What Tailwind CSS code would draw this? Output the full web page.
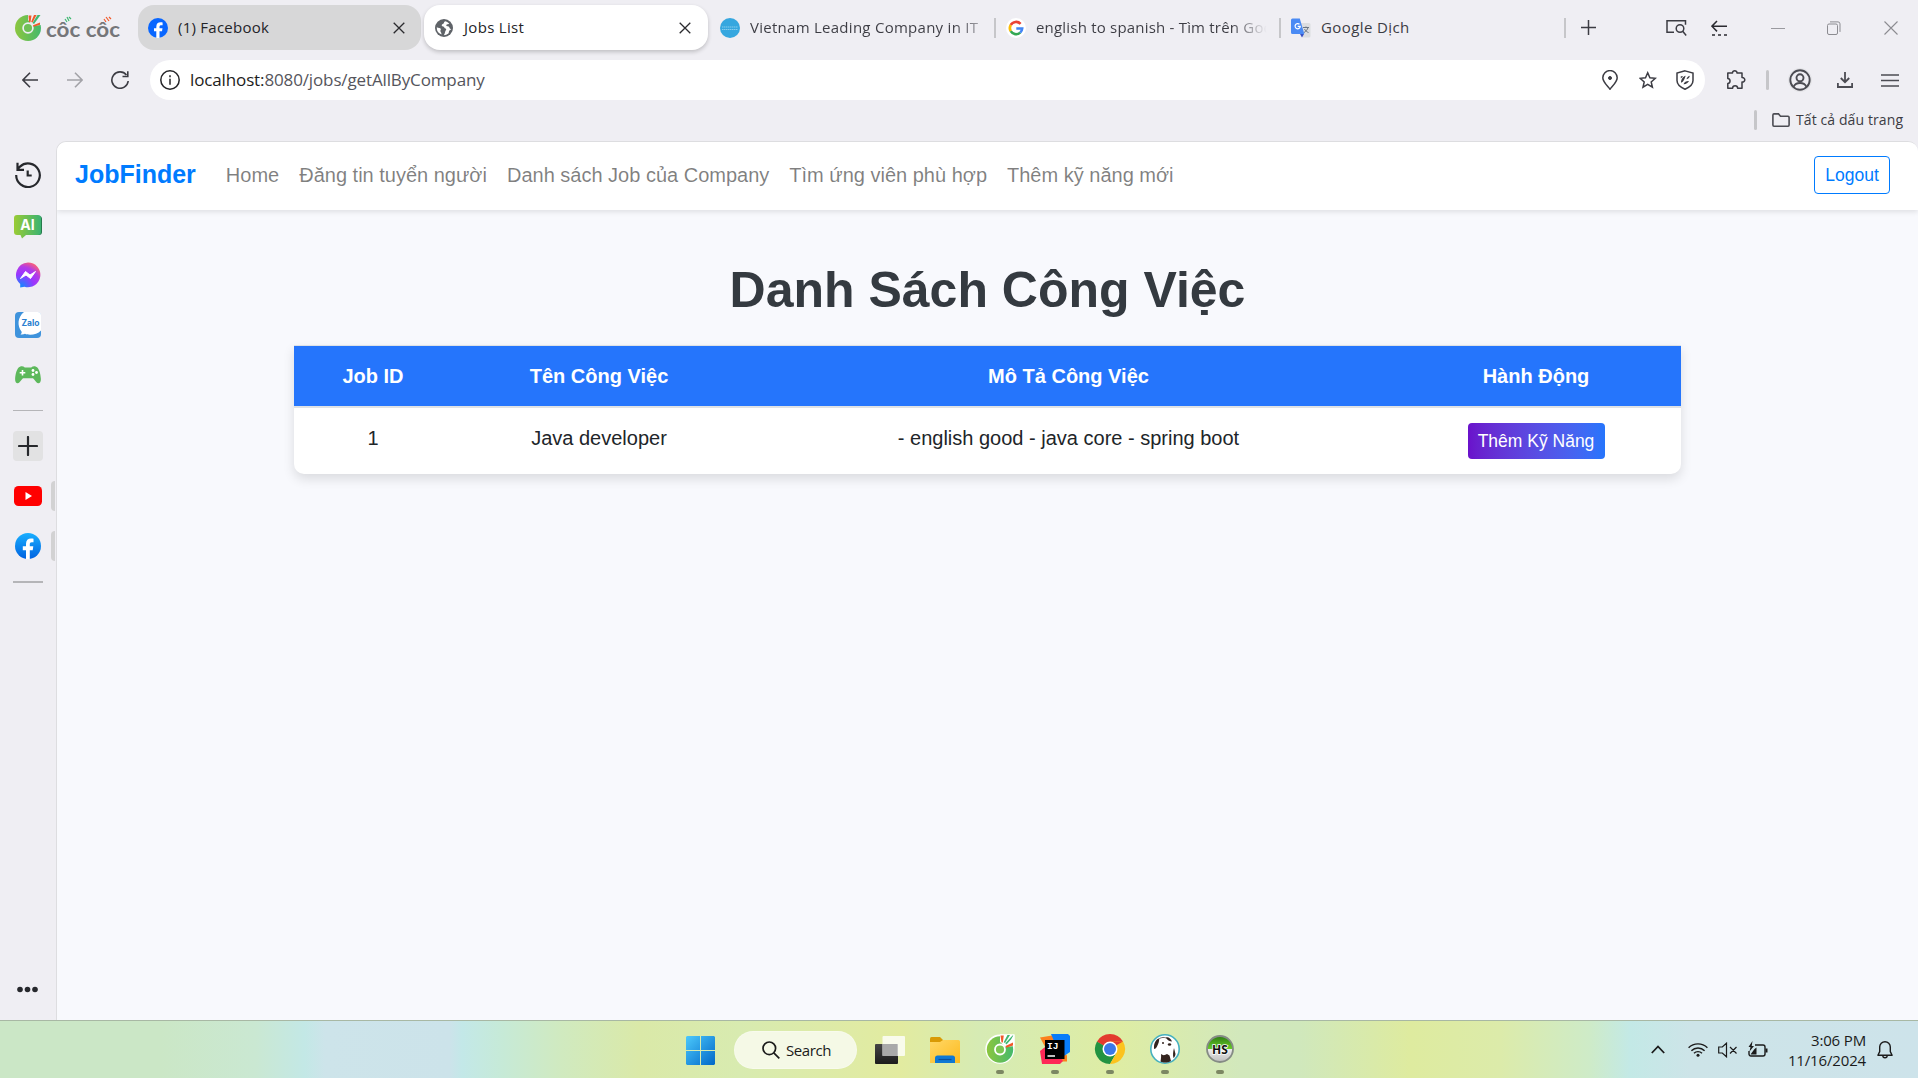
<!DOCTYPE html>
<html lang="vi">
<head>
<meta charset="utf-8">
<title>Jobs List</title>
<script src="https://cdn.jsdelivr.net/npm/@tailwindcss/browser@4"></script>
</head>
<body class="flex h-[1078px] w-[1918px] flex-col overflow-hidden bg-[#efeef3] font-['Open_Sans',sans-serif] text-[#3c3c43]">

<!-- Tab strip -->
<header class="flex h-[60px] shrink-0 items-start pt-[5px]">
  <div class="flex h-[45px] w-[138px] items-center pl-[15px]">
    <svg class="h-[26px] w-[26px] shrink-0" viewBox="0 0 26 26">
      <defs><linearGradient id="cc" x1="0" y1="0" x2="1" y2="0"><stop offset="0" stop-color="#8cc63f"/><stop offset="1" stop-color="#45b96b"/></linearGradient></defs>
      <circle cx="13" cy="13" r="13" fill="url(#cc)"/>
      <path d="M13 0V5l5 6 8-1V0z" fill="#efeef3"/>
      <circle cx="13" cy="13" r="4.900" fill="#6fc056" stroke="#efeef3" stroke-width="1.700"/>
      <path d="M13.500 0.500h3l-1 6.500h-1.500zM25 7.500v2.300l-6.500 2 -.5-1.500z" fill="#f1592a"/><path d="M19 0h2.600l-4 7.500-1.500-.6z" fill="#f1592a"/><path d="M22.500 0h3l-6.500 9-1.500-1z" fill="#3fb871"/>
    </svg>
    <svg class="ml-[4px] h-[30px] w-[78px]" viewBox="0 0 78 30">
      <text x="1" y="24" textLength="74" lengthAdjust="spacingAndGlyphs" font-family="Lato" font-weight="700" font-size="21" fill="#757679">côc côc</text>
      <path d="M22 9l-2-3M24 8l-2-4M26 6l-2-2" stroke="#3fb871" stroke-width="1.200"/><path d="M61 9l-2-3M64 8l-3-4M66 6l-2-2" stroke="#f1592a" stroke-width="1.200"/>
    </svg>
  </div>
  <div class="flex h-[45px] w-[283px] items-center rounded-[16px] bg-[#d7d7d8] pl-[10px] pr-[16px] text-[15px] text-[#242428]">
    <svg class="h-5 w-5" viewBox="0 0 20 20"><circle cx="10" cy="10" r="10" fill="#0866ff"/><path d="M8.300 20v-6.700H6v-3h2.300V9c0-3.300 1.500-4.700 4.500-4.700.6 0 1.400.1 1.800.2v2.700h-1.300c-1.300 0-1.800.6-1.800 1.900v1.200h3l-.5 3h-2.500V20z" fill="#fff"/></svg>
    <span class="ml-[10px] grow whitespace-nowrap tracking-[0.25px]">(1) Facebook</span>
    <svg class="h-3 w-3" viewBox="0 0 12 12" stroke="#2a2a2e" stroke-width="1.300"><path d="M.7.7l10.600 10.600M11.300.7L.7 11.300"/></svg>
  </div>
  <div class="ml-[3px] flex h-[45px] w-[284px] items-center rounded-[16px] bg-white pl-[11px] pr-[17px] text-[15px] text-[#242428] shadow-[0_2px_4px_rgba(0,0,0,0.2)]">
    <svg class="h-[18px] w-[18px]" viewBox="0 0 18 18"><circle cx="9" cy="9" r="9" fill="#5f6368"/><path d="M10.500 2.200c-2 .3-1 2-2.600 2.800-1 .4-1.400 1-1 2 .5.700 2 .3 2.400 1.400.5 1.300 1.900.4 1.900 2 0 1-1 1-1 2.300-.2 1.500-1.200 3-1.400 3.500a7.200 7.200 0 0 0 4.600-1.700c.8-1 .2-2 1-3 .6-.8 1.700-.7 1.800-1.600-2.200.4-1.200-2.700-3.800-2.600-1.300 0-1.500-1.200-.6-1.800.7-.5 1.700-.2 2.500-.8a7 7 0 0 0-3.800-2.500zM1.800 8.300c1.500 1 3.700.5 4 1.800.3 1.200-.8 1.200-.3 2.500.2.900 1 1 1 2.900A7.200 7.200 0 0 1 1.800 8.300z" fill="#fff"/></svg>
    <span class="ml-[11px] grow whitespace-nowrap tracking-[0.3px]">Jobs List</span>
    <svg class="h-3 w-3" viewBox="0 0 12 12" stroke="#2a2a2e" stroke-width="1.300"><path d="M.7.7l10.600 10.600M11.300.7L.7 11.300"/></svg>
  </div>
  <div class="flex h-[45px] w-[288px] items-center pl-[12px] text-[15px]">
    <svg class="h-5 w-5 shrink-0" viewBox="0 0 20 20"><circle cx="10" cy="10" r="10" fill="#36a7df"/><path d="M2 9h16M2 11.500h16" stroke="#9bd5f0" stroke-width=".8" stroke-dasharray="1.500 .5"/></svg>
    <span class="ml-[10px] w-[231px] overflow-hidden bg-linear-to-r from-[#3c3c43] from-88% to-[#3c3c43]/40 bg-clip-text whitespace-nowrap text-transparent tracking-[0.27px]">Vietnam Leading Company in IT</span>
    <span class="ml-[13px] h-5 w-[2px] bg-[#c6c6c9]"></span>
  </div>
  <div class="flex h-[45px] w-[285px] items-center pl-[10px] text-[15px]">
    <svg class="h-5 w-5 shrink-0" viewBox="0 0 20 20"><circle cx="10" cy="10" r="10" fill="#fff"/><g fill="none" stroke-width="2.600"><path d="M14.600 5.900A6.200 6.200 0 0 0 4.700 7" stroke="#ea4335"/><path d="M4.700 7a6.200 6.200 0 0 0 0 6.200" stroke="#fbbc05"/><path d="M4.700 13.200a6.200 6.200 0 0 0 9.500 1.400" stroke="#34a853"/><path d="M14.200 14.600a6 6 0 0 0 2-4.100H10.300" stroke="#4285f4"/></g></svg>
    <span class="ml-[10px] w-[233px] overflow-hidden bg-linear-to-r from-[#3c3c43] from-84% to-[#3c3c43]/0 to-99% bg-clip-text whitespace-nowrap text-transparent tracking-[0.2px]">english to spanish - Tìm trên Goo</span>
    <span class="ml-[10px] h-5 w-[2px] bg-[#c6c6c9]"></span>
  </div>
  <div class="flex h-[45px] w-[285px] items-center pl-[10px] text-[15px]">
    <svg class="h-5 w-5 shrink-0" viewBox="0 0 20 20"><path d="M7 5h11a1.500 1.500 0 0 1 1.500 1.500V18a1.500 1.500 0 0 1-1.500 1.500h-6z" fill="#dcdde0"/><path d="M9 16h4l-2 3.500z" fill="#3a53c5"/><path d="M1.500.5h7.300L13.300 16H1.500A1.500 1.500 0 0 1 0 14.500V2A1.500 1.500 0 0 1 1.500.5z" fill="#4a8af4"/><path d="M8.500 6.300a2.600 2.600 0 1 0 .8 2H6.700" fill="none" stroke="#fff" stroke-width="1.200"/><path d="M12 9.500h6M15 8.500v1M17 9.500c-.5 2-2 4-4 5M13.500 11c.7 1.500 2.500 3 4 3.500" stroke="#6b7785" stroke-width="1" fill="none"/></svg>
    <span class="ml-[10px] grow whitespace-nowrap tracking-[0.4px]">Google Dịch</span>
    <span class="h-5 w-[2px] bg-[#c6c6c9]"></span>
  </div>
  <div class="flex h-[45px] grow items-center pl-[15px]">
    <svg class="h-[15px] w-[15px]" viewBox="0 0 15 15" stroke="#3c3c43" stroke-width="1.500"><path d="M7.500 0v15M0 7.500h15"/></svg>
    <svg class="ml-[70px] h-[18px] w-[21px]" viewBox="0 0 21 18" fill="none" stroke="#3c3c43" stroke-width="1.500"><path d="M8 13.200H1V1.700h18.500v4"/><circle cx="14" cy="9.500" r="3.800"/><path d="M16.700 12.300l3.500 4.200"/></svg>
    <svg class="ml-[24px] h-[16px] w-[17px]" viewBox="0 0 17 16" fill="none" stroke="#2a2a30" stroke-width="1.500"><path d="M16 6.200H1M6 1L.9 6.200 6 11.400M1 15h3M7 15h3M13 15h3"/></svg>
    <svg class="ml-[43px] h-[14px] w-[14px]" viewBox="0 0 14 14" stroke="#9a9a9f"><path d="M0 7.500h14"/></svg>
    <svg class="ml-[42px] h-[14px] w-[14px]" viewBox="0 0 14 14" fill="none" stroke="#8c8c91"><rect x=".5" y="3" width="10" height="10.500" rx="1.500"/><path d="M3 .9h8a2 2 0 0 1 2 2v8"/></svg>
    <svg class="ml-[43px] h-[14px] w-[14px]" viewBox="0 0 14 14" stroke="#8c8c91" stroke-width="1.100"><path d="M.5.5l13 13M13.500.5l-13 13"/></svg>
  </div>
</header>

<!-- Address bar -->
<div class="flex h-[40px] shrink-0 items-center">
  <svg class="ml-[22px] h-4 w-4" viewBox="0 0 16 16" fill="none" stroke="#3c3c43" stroke-width="1.600"><path d="M16 8H1M8 .7L.9 8 8 15.300"/></svg>
  <svg class="ml-[29px] h-4 w-4" viewBox="0 0 16 16" fill="none" stroke="#a3a3a8" stroke-width="1.600"><path d="M0 8h15M8 .7L15.100 8 8 15.300"/></svg>
  <svg class="ml-[28px] h-[18px] w-[18px]" viewBox="0 0 18 18" fill="none" stroke="#3c3c43" stroke-width="1.600"><path d="M17.200 10A8.200 8.200 0 1 1 15.500 4M11.500 5.500h5.300V.3"/></svg>
  <div class="ml-[21px] flex h-[40px] w-[1555px] items-center rounded-full bg-white pl-[10px] pr-[11px]">
    <svg class="h-5 w-5" viewBox="0 0 20 20" fill="none" stroke="#242428" stroke-width="1.500"><circle cx="10" cy="10" r="9.200"/><path d="M10 8.700v6M10 5.300v1.900"/></svg>
    <span class="ml-[10px] grow whitespace-nowrap text-[17px] tracking-[-0.13px] text-[#55555c]"><span class="text-[#1c1c20]">localhost:</span>8080/jobs/getAllByCompany</span>
    <svg class="h-5 w-4" viewBox="0 0 16 20" fill="none" stroke="#3c3c43" stroke-width="1.500"><path d="M8 19.200C5 15.500.8 11.800.8 7.800a7.200 7.200 0 0 1 14.400 0c0 4-4.200 7.700-7.200 11.400z"/><circle cx="8" cy="8" r="1.500" fill="#3c3c43" stroke-width="1"/></svg>
    <svg class="ml-[21px] h-[18px] w-[18px]" viewBox="0 0 18 18" fill="none" stroke="#3c3c43" stroke-width="1.500"><path d="M8.700 1.800l2.200 5 5.400.5-4.100 3.600 1.200 5.300L8.700 13.400l-4.700 2.800 1.200-5.300L1.100 7.300l5.400-.5z"/></svg>
    <svg class="ml-[19px] h-5 w-[18px]" viewBox="0 0 18 20" fill="none" stroke="#3c3c43" stroke-width="1.500"><path d="M9 .9l8 2.200v7.400c0 4-3.500 6.800-8 8.700-4.500-1.900-8-4.700-8-8.700V3.100z"/><path d="M4.800 8.500V6.200h2.400zM5 12.800c0-3.500 2-6.300 4.700-7-.6 1.500-.8 2.500-1.600 4-.7 1.500-1.800 2.500-3.100 3zM7.500 14.300c1-2.500 3-3.500 5.500-3.300-1 2-3 3.500-5.500 3.300zM10.500 9.300c.5-1.800 1.500-3 3.200-3.500 0 1.800-1.200 3-3.200 3.500z" fill="#3c3c43" stroke="none"/></svg>
  </div>
  <svg class="ml-[21px] h-5 w-5" viewBox="0 0 20 20" fill="none" stroke="#3c3c43" stroke-width="1.500"><path d="M1.800 3h4.700c-.3-3 4.800-3 4.500 0H16v4.600c3.700-.3 3.700 4.700 0 4.500V18.200h-4.400c0-3.200-5-3.200-5 0H1.800v-4.800c3-.3 3-4.600 0-4.900z" stroke-linejoin="round"/></svg>
  <span class="ml-[20px] h-5 w-[3px] rounded bg-[#c6c6c9]"></span>
  <svg class="ml-[19px] h-6 w-6" viewBox="0 0 24 24" fill="none" stroke="#4c4c53" stroke-width="1.900"><circle cx="12" cy="12" r="11.500" stroke="#e2e2e5" stroke-width="1"/><circle cx="12" cy="12" r="9.700"/><circle cx="12" cy="9.800" r="3.500"/><path d="M5.500 18.800c2.500-5 10.500-5 13 0"/></svg>
  <svg class="ml-[25px] h-4 w-4" viewBox="0 0 16 16" fill="none" stroke="#4c4c53" stroke-width="1.800"><path d="M8 0v10M3.800 6L8 10.200 12.200 6M.9 11v4h14.200v-4"/></svg>
  <svg class="ml-[28px] h-[13px] w-[18px]" viewBox="0 0 18 13" stroke="#4c4c53" stroke-width="1.700"><path d="M0 1h18M0 6.500h18M0 12h18"/></svg>
</div>

<!-- Bookmarks bar -->
<div class="flex h-[40px] shrink-0 items-center justify-end pr-[14px] text-[14px]">
  <span class="h-5 w-[3px] rounded bg-[#c6c6c9]"></span>
  <svg class="ml-[15px] h-[14px] w-[18px]" viewBox="0 0 18 14" fill="none" stroke="#4c4c53" stroke-width="1.600"><path d="M.9 12V2A1.200 1.200 0 0 1 2 .9h4.500l2 2.300H16A1.200 1.200 0 0 1 17.100 4.400V12a1.200 1.200 0 0 1-1.100 1.200H2A1.200 1.200 0 0 1 .9 12z"/></svg>
  <span class="ml-[6px] w-[108px] whitespace-nowrap pb-px tracking-[0.1px]">Tất cả dấu trang</span>
</div>

<div class="flex min-h-0 grow">
  <!-- Browser sidebar -->
  <aside class="flex w-[56px] shrink-0 flex-col pt-[10px]">
    <div class="flex h-[50px] w-[55px] items-center justify-center">
      <svg class="h-[26px] w-[26px]" viewBox="0 0 26 26" fill="none" stroke="#26282c" stroke-width="2.200"><path d="M1.200 13A11.800 11.800 0 1 0 5 4.600L2.500 7M2.500.8v7h6.500M12.700 8.500v5h4"/></svg>
    </div>
    <div class="flex h-[50px] w-[56px] items-center justify-center pt-[3px]">
      <svg class="h-[26px] w-[28px]" viewBox="0 0 28 26"><defs><linearGradient id="ai"><stop offset="0" stop-color="#9acb35"/><stop offset="1" stop-color="#3bb371"/></linearGradient></defs><rect x="4" y="2" width="24" height="19" rx="3" fill="#267a4c"/><path d="M3 1h21a3 3 0 0 1 3 3v14a3 3 0 0 1-3 3H12l-4 3.500L6.500 21H3a3 3 0 0 1-3-3V4a3 3 0 0 1 3-3z" fill="url(#ai)"/><text x="13.500" y="15.500" text-anchor="middle" font-family="Inter" font-size="14" font-weight="700" fill="#fff">AI</text></svg>
    </div>
    <div class="flex h-[50px] w-[56px] items-center justify-center">
      <svg class="h-[26px] w-[26px]" viewBox="0 0 26 26"><defs><radialGradient id="ms" cx=".2" cy="1" r="1.100"><stop offset="0" stop-color="#0a8dff"/><stop offset=".5" stop-color="#9a36ff"/><stop offset=".75" stop-color="#b23be8"/><stop offset="1" stop-color="#ff6370"/></radialGradient></defs><path d="M13 .4A12.400 12.400 0 1 1 9.500 24.700L5.200 25.500V22A12.400 12.400 0 0 1 13 .4z" fill="url(#ms)"/><path d="M5.500 16.500l5-7 4.500 3.500 5.500-3.500-5 7-4.500-3.500z" fill="#fff" stroke="#fff"/></svg>
    </div>
    <div class="flex h-[50px] w-[56px] items-center justify-center">
      <svg class="h-[26px] w-[26px]" viewBox="0 0 26 26"><rect width="26" height="26" rx="4" fill="#3f93dc"/><path d="M9 0h14a3 3 0 0 1 3 3v15.500c-4 4.500-12 5-16 3.300-1.200.8-3 .9-4.500.7 1-1 1.500-2 1-3C2 14 2.500 5 9 0z" fill="#fff"/><text x="15.500" y="14" text-anchor="middle" font-family="Inter" font-size="8.500" font-weight="700" fill="#2b7fd0">Zalo</text></svg>
    </div>
    <div class="flex h-[50px] w-[56px] items-center justify-center">
      <svg class="h-[18px] w-[26px]" viewBox="0 0 26 18"><path d="M5 .7C7 0 8.500.5 9.800 1.500h6.400C17.500.5 19 0 21 .7c3 1 4.600 7 4.900 12.300.1 3-1.200 4.500-2.700 4.300-2.200-.3-3.500-3.800-5.300-5H8.100c-1.800 1.200-3.100 4.700-5.300 5C1.300 17.500 0 16 .1 13 .4 7.700 2 1.700 5 .7z" fill="#5db85b"/><path d="M7.500 4v5.500M4.700 6.700h5.600" stroke="#fff" stroke-width="1.600"/><g fill="#fff"><circle cx="18" cy="4.500" r="1.400"/><circle cx="18" cy="8.500" r="1.400"/><circle cx="21.500" cy="6.500" r="1.400"/></g></svg>
    </div>
    <div class="ml-[13px] mt-[10px] h-px w-[30px] shrink-0 bg-[#b5b5b8]"></div>
    <div class="ml-[13px] mt-[20px] flex h-[30px] w-[30px] shrink-0 items-center justify-center rounded-[4px] bg-[#e2e2e3]">
      <svg class="mr-[1px] h-5 w-5" viewBox="0 0 20 20" stroke="#26282c" stroke-width="2.200" stroke-linecap="round"><path d="M10 1v18M1 10h18"/></svg>
    </div>
    <div class="mt-[10px] flex h-[50px] items-center">
      <svg class="ml-[14px] h-5 w-7" viewBox="0 0 28 20"><rect width="28" height="20" rx="4.500" fill="#f00"/><path d="M11.500 6v8l6.500-4z" fill="#fff"/></svg>
      <span class="ml-[9px] h-[30px] w-[4px] rounded-l-[4px] bg-[#d2d2d3]"></span>
    </div>
    <div class="flex h-[50px] items-center">
      <svg class="ml-[15px] h-[26px] w-[26px]" viewBox="0 0 26 26"><defs><linearGradient id="fb" x2="0" y2="1"><stop offset="0" stop-color="#19afff"/><stop offset="1" stop-color="#0062e0"/></linearGradient></defs><circle cx="13" cy="13" r="13" fill="url(#fb)"/><path d="M11 26v-8.700H7.800v-4H11v-2.500c0-3.400 2-5.200 5-5.200 1 0 2 .1 2.500.2v3.500h-1.700c-1.500 0-2 .8-2 1.900v2.100h3.500l-.6 4h-2.900V26z" fill="#fff"/></svg>
      <span class="ml-[10px] h-[30px] w-[4px] rounded-l-[4px] bg-[#d2d2d3]"></span>
    </div>
    <div class="ml-[13px] mt-[10px] h-[2px] w-[30px] shrink-0 bg-[#b5b5b8]"></div>
    <svg class="mb-[27px] ml-[17px] mt-auto h-[7px] w-[21px] shrink-0" viewBox="0 0 21 7" fill="#26282c"><circle cx="3" cy="3.500" r="2.800"/><circle cx="10.500" cy="3.500" r="2.800"/><circle cx="18" cy="3.500" r="2.800"/></svg>
  </aside>

  <!-- Page -->
  <main class="mt-px flex grow flex-col overflow-hidden rounded-t-[10px] border-l border-t border-[#dddde0] bg-[#f8f9fd] font-['Liberation_Sans',Arial,sans-serif]">
    <nav class="flex h-[68px] shrink-0 items-center bg-white pb-[2px] pl-[18px] pr-[28px] text-[20px] text-black/50 shadow-[0_2px_5px_rgba(0,0,0,0.1)]">
      <a class="text-[25px] font-bold text-[#007bff]">JobFinder</a>
      <div class="ml-[30px] flex gap-[20px] whitespace-nowrap">
        <a>Home</a><a>Đăng tin tuyển người</a><a>Danh sách Job của Company</a><a>Tìm ứng viên phù hợp</a><a>Thêm kỹ năng mới</a>
      </div>
      <a class="ml-auto flex h-[38px] w-[76px] items-center justify-center rounded-[4px] border border-[#007bff] pt-px text-[17.5px] text-[#007bff]">Logout</a>
    </nav>
    <h1 class="mt-[50px] text-center text-[50px] font-bold leading-[60px] text-[#343a40]">Danh Sách Công Việc</h1>
    <div class="mx-auto mt-[25px] w-[1387px] overflow-hidden rounded-b-[10px] bg-white text-center text-[20px] text-[#212529] shadow-[0_5px_12px_rgba(0,0,0,0.12)]">
      <div class="grid h-[63px] grid-cols-[158px_294px_645px_290px] items-center border-b-2 border-t border-[#dee2e6] bg-[#2575fc] font-bold text-white">
        <div>Job ID</div><div>Tên Công Việc</div><div>Mô Tả Công Việc</div><div>Hành Động</div>
      </div>
      <div class="grid h-[66px] grid-cols-[158px_294px_645px_290px] items-start pt-[15px] leading-[30px]">
        <div>1</div><div>Java developer</div><div>- english good - java core - spring boot</div>
        <div class="flex justify-center"><button class="h-[36px] w-[137px] rounded-[4px] bg-linear-to-r from-[#6a11cb] to-[#2575fc] text-[17.5px] text-white">Thêm Kỹ Năng</button></div>
      </div>
    </div>
  </main>
</div>

<!-- Windows taskbar -->
<footer class="flex h-[58px] shrink-0 items-center border-t border-[#a8b8a4] bg-[linear-gradient(90deg,#cbe7c6_0px,#cbe7c6_160px,#cae8d2_255px,#c3e8e6_305px,#cde4ea_325px,#cce3ea_450px,#c3e8e8_462px,#c6ead8_500px,#d0eac0_560px,#dae9a8_640px,#d8ebb0_740px,#e2eba0_900px,#d6ebb4_980px,#deeda4_1120px,#d2e8bc_1240px,#d0e8bc_1300px,#deeb9f_1410px,#dcebaa_1500px,#ceebc8_1590px,#c3e9e6_1630px,#cde4e8_1690px,#cde3ea_1918px)] text-[#1b1b1b]">
  <svg class="ml-[686px] mt-px h-[29px] w-[29px] shrink-0" viewBox="0 0 29 29"><defs><linearGradient id="wi" x2="1" y2="1"><stop offset="0" stop-color="#4cc9fb"/><stop offset="1" stop-color="#0067c8"/></linearGradient></defs><path d="M1 0h13v14H0V1zM15 0h13l1 1v13H15zM0 15h14v14H1l-1-1zM15 15h14v13l-1 1H15z" fill="url(#wi)"/></svg>
  <div class="ml-[19px] mt-px flex h-[38px] w-[123px] shrink-0 items-center rounded-full border border-white/30 bg-[#f5f9e6] pl-[27px] text-[15px]">
    <svg class="h-[18px] w-[18px]" viewBox="0 0 18 18" fill="none" stroke="#1b1b1b" stroke-width="1.700"><circle cx="7.300" cy="7.300" r="6.300"/><path d="M11.800 11.800l5.500 5.500"/></svg>
    <span class="ml-[6px] tracking-[-0.4px]">Search</span>
  </div>
  <div class="ml-[13px] flex h-full shrink-0 items-center gap-[15px]">
    <svg class="h-[40px] w-[40px]" viewBox="0 0 40 40"><defs><linearGradient id="tv" x2="0" y2="1"><stop offset="0" stop-color="#444"/><stop offset="1" stop-color="#1c1c1c"/></linearGradient></defs><rect x="5" y="14" width="23" height="20" rx="1" fill="url(#tv)"/><rect x="12.500" y="6" width="22.500" height="20" rx="1" fill="#fff" fill-opacity=".8"/><rect x="12.500" y="14" width="15" height="12" fill="#a9a9a9"/></svg>
    <svg class="h-[40px] w-[40px]" viewBox="0 0 40 40"><defs><linearGradient id="fo" x2="1" y2="1"><stop offset="0" stop-color="#ffd766"/><stop offset="1" stop-color="#fdbb1f"/></linearGradient></defs><path d="M5 8.500A1.500 1.500 0 0 1 6.500 7H15l3 3v4H5z" fill="#d99a05"/><path d="M5 12h10l3-2h15.500A1.500 1.500 0 0 1 35 11.500V33H5z" fill="url(#fo)"/><path d="M10 33v-5a2.500 2.500 0 0 1 2.500-2.500h15A2.500 2.500 0 0 1 30 28v5z" fill="#0f78d4"/><path d="M13.500 29.500h13" stroke="#0b4f9c" stroke-width="1.200"/></svg>
    <svg class="mt-[15px] h-[57px] w-[40px]" viewBox="0 0 40 57"><path d="M20 5.500h14.500V20A14.600 14.600 0 1 1 20 5.500z" fill="#fff"/><circle cx="20" cy="20.500" r="13.200" fill="url(#cc)"/><path d="M20 13V5.500h14.500V17l-9 1z" fill="#fff"/><path d="M20.500 6.500h3.300l-1 7h-1.300zM33 13.500v3l-7 2.200-.5-1.600z" fill="#f1592a"/><path d="M27.500 6H30l-5 8-1.300-.8zM32.500 6.500h.8L31 10.500l-4.500 5-1.200-1.200z" fill="#3fb871"/><circle cx="20" cy="20.500" r="5" fill="#7cc652" stroke="#fff" stroke-width="1.800"/><rect x="16" y="41" width="8" height="4" rx="2" fill="#7c8763"/></svg>
    <svg class="mt-[15px] h-[57px] w-[40px]" viewBox="0 0 40 57"><path d="M5 8.500l12-2 15 20v6H18z" fill="#fc801d"/><path d="M16 5h17l2 2v16l-9 6z" fill="#087cfa"/><path d="M5 22l9-7 14 17-3 3H7z" fill="#fe2857"/><rect x="10" y="11" width="19.500" height="19" fill="#000"/><text x="12" y="20" font-family="Liberation Mono" font-weight="700" font-size="9.500" fill="#fff">IJ</text><path d="M12.500 27h7.500" stroke="#fff" stroke-width="1.500"/><rect x="16" y="41" width="8" height="4" rx="2" fill="#7c8763"/></svg>
    <svg class="mt-[15px] h-[57px] w-[40px]" viewBox="0 0 40 57"><path d="M20 20L7 12.500A15 15 0 0 1 33 12.500z" fill="#e33b2e"/><path d="M20 20L7 12.500A15 15 0 0 0 20 35l6.500-11.300z" fill="#229342"/><path d="M20 20v-7.500h13A15 15 0 0 1 20 35l6.500-11.300z" fill="#fcc31e"/><path d="M7 12.500h26L20 20z" fill="#e33b2e"/><circle cx="20" cy="20" r="7.500" fill="#fff"/><circle cx="20" cy="20" r="6" fill="#3b78e7"/><rect x="16" y="41" width="8" height="4" rx="2" fill="#7c8763"/></svg>
    <svg class="mt-[15px] h-[57px] w-[40px]" viewBox="0 0 40 57"><circle cx="20" cy="20" r="14.200" fill="#fff" stroke="#45b0bf" stroke-width="1.600"/><path d="M9 17c.5-4 2.500-7 5-7.500.5 2-.5 5-2 8-1 2-2.500 3-3 2zM21 8.500c2-1 5 1 6 4-2 0-4-1-6-4zM29 19l1.500 6c-.3 2-1 3.500-2 4-.8-3-.5-6 .5-10zM16 25c1.500 1.500 4 1.500 6 0l2.500 1.500 1.500 5.500c-3.500 2-8 1.800-10.500.5.5-3 .8-5 .5-7.500z" fill="#33231e"/><path d="M14 10c3-2.500 8-2 10 1.500" fill="none" stroke="#33231e" stroke-width=".7"/><circle cx="18" cy="14" r="1" fill="#33231e"/><ellipse cx="24.500" cy="15.500" rx="1.700" ry="1.300" fill="#33231e"/><rect x="16" y="41" width="8" height="4" rx="2" fill="#7c8763"/></svg>
    <svg class="mt-[15px] h-[57px] w-[40px]" viewBox="0 0 40 57"><defs><linearGradient id="hs" x2="0" y2="1"><stop offset="0" stop-color="#2c7a12"/><stop offset=".5" stop-color="#6ace2a"/><stop offset=".51" stop-color="#ececec"/><stop offset="1" stop-color="#bdbdbd"/></linearGradient></defs><circle cx="20" cy="20" r="13" fill="url(#hs)" stroke="#858b85" stroke-width="1.800"/><text x="20" y="24.500" text-anchor="middle" font-family="Open Sans" font-weight="700" font-size="12" fill="#111" stroke="#fff" stroke-width="1.500" paint-order="stroke">HS</text><rect x="16" y="41" width="8" height="4" rx="2" fill="#7c8763"/></svg>
  </div>
  <div class="ml-auto flex shrink-0 items-center">
    <svg class="h-[9px] w-[14px]" viewBox="0 0 14 9" fill="none" stroke="#1b1b1b" stroke-width="1.800"><path d="M.8 8L7 1.500 13.200 8"/></svg>
    <svg class="ml-[23px] h-[15px] w-[20px]" viewBox="0 0 20 15" fill="none" stroke="#1b1b1b" stroke-width="1.400"><path d="M.6 5.800a13.200 13.200 0 0 1 18.800 0M3.400 8.700a9.300 9.300 0 0 1 13.200 0M6 11.300a5.600 5.600 0 0 1 8 0"/><circle cx="10" cy="13.200" r="1.500" fill="#1b1b1b" stroke="none"/></svg>
    <svg class="ml-[10px] h-[16px] w-[20px]" viewBox="0 0 20 16" fill="none" stroke="#1b1b1b" stroke-width="1.200"><path d="M8.500 1.200v13.600L4.300 11H.7V5h3.600zM12 5l6.500 6.500M18.500 5L12 11.500"/></svg>
    <svg class="ml-[10px] h-[18px] w-[20px]" viewBox="0 0 20 18" fill="none" stroke="#1b1b1b" stroke-width="1.400"><path d="M7 4h8a2 2 0 0 1 2 2v7a2 2 0 0 1-2 2H3a2 2 0 0 1-2-2v-3"/><path d="M17.500 7.500h2v4h-2z" fill="#1b1b1b" stroke="none"/><path d="M2.500 13.500h6V6.500L6.500 8zM4.500 0L.5 6h2L1.500 10.500 6 5H3.700z" fill="#1b1b1b" stroke="none"/></svg>
    <div class="ml-[18px] w-[80px] whitespace-nowrap text-right text-[15px] leading-[20px] tracking-[-0.15px]"><div>3:06 PM</div><div>11/16/2024</div></div>
    <svg class="ml-[11px] mr-[25px] h-[18px] w-[16px]" viewBox="0 0 16 18" fill="none" stroke="#1b1b1b" stroke-width="1.400"><path d="M8 .8a5.300 5.300 0 0 0-5.300 5.300v4.500L.9 14.200h14.200l-1.800-3.600V6.100A5.300 5.300 0 0 0 8 .8zM5.800 14.500a2.200 2.200 0 0 0 4.400 0" stroke-linejoin="round"/></svg>
  </div>
</footer>
</body>
</html>
